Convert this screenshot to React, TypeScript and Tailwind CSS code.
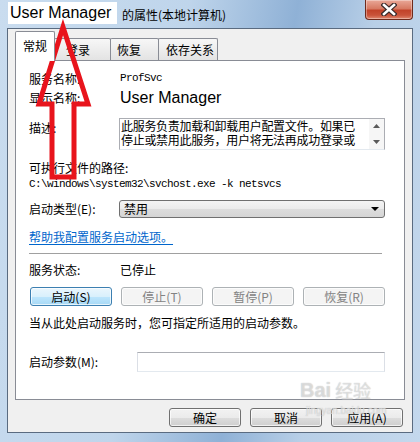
import React from "react";

type BtnKind = "normal" | "default" | "disabled";

function Btn({ kind = "normal", className = "", children }: { kind?: BtnKind; className?: string; children: React.ReactNode }) {
  const look =
    kind === "default"
      ? "border-[#3c7fb1] bg-[linear-gradient(to_bottom,#eaf6fd_0%,#d9f0fc_50%,#bee6fd_50%,#a7d9f5_100%)] text-black"
      : kind === "disabled"
      ? "border-[#adb2b5] bg-[#f4f4f4] text-[#838383]"
      : "border-[#707070] bg-[linear-gradient(to_bottom,#f2f2f2_0%,#ebebeb_50%,#dddddd_50%,#cfcfcf_100%)] text-black";
  return (
    <div className={`h-full flex items-center justify-center rounded-[3px] border shadow-[inset_0_0_0_1px_rgba(255,255,255,0.7)] text-[12px] leading-none ${look} ${className}`}>
      {children}
    </div>
  );
}

function Tab({ label, active = false, className = "" }: { label: string; active?: boolean; className?: string }) {
  if (active) {
    return (
      <div className={`relative z-10 h-[30px] mb-[-1px] bg-white border border-b-0 border-[#898c95] rounded-t-[2px] pt-[7px] leading-[14px] ${className}`}>
        {label}
      </div>
    );
  }
  return (
    <div className={`h-[22px] ml-[-1px] border border-b-0 border-[#898c95] rounded-t-[2px] bg-[linear-gradient(to_bottom,#f7f7f7,#e3e3e3)] pt-[4px] leading-[14px] ${className}`}>
      {label}
    </div>
  );
}

export default function App() {
  return (
    <div className="relative w-[420px] h-[442px] overflow-hidden flex flex-col bg-[linear-gradient(100deg,#c9dcef_0%,#bfd5eb_38%,#8fb1d6_60%,#b8cfe7_76%,#c4d8ed_100%)] font-['Noto_Sans_CJK_SC',sans-serif] text-[12px] text-black">
      {/* title bar */}
      <div className="h-[28px] shrink-0 flex items-start pl-[8px]">
        <div className="mt-[2px] h-[22px] w-[109px] bg-white flex items-center pl-[2px] font-['Liberation_Sans',sans-serif] text-[16px] leading-none">
          User Manager
        </div>
        <div className="ml-[5px] mt-[8px] leading-[14px]">的属性(本地计算机)</div>
        <div className="ml-auto mr-[7px] w-[48px] h-[20px] rounded-b-[4px] border border-t-0 border-[#6e2a1c] bg-[linear-gradient(to_bottom,#e9a898_0%,#d77a63_45%,#c2432a_55%,#c9533a_80%,#e08870_100%)] shadow-[inset_0_0_0_1px_rgba(255,255,255,0.35)] flex items-center justify-center">
          <svg width="16" height="13" viewBox="0 0 16 13">
            <path d="M3 2 L13 11 M13 2 L3 11" stroke="#3b2a2a" strokeWidth="5" strokeLinecap="square" />
            <path d="M3 2 L13 11 M13 2 L3 11" stroke="#ffffff" strokeWidth="2.6" strokeLinecap="square" />
          </svg>
        </div>
      </div>

      {/* client area */}
      <div className="mx-[7px] h-[405px] shrink-0 border border-[#5a6b80] bg-[#f0f0f0] flex flex-col px-[7px] pt-[2px]">
        <div className="h-[29px] flex items-end">
          <Tab label="常规" active className="w-[40px] pl-[7px]" />
          <Tab label="登录" className="w-[57px] pl-[11px]" />
          <Tab label="恢复" className="w-[49px] pl-[6px]" />
          <Tab label="依存关系" className="w-[60px] pl-[7px]" />
        </div>

        {/* tab panel */}
        <div className="h-[340px] w-[390px] bg-white border border-[#898c95] flex flex-col pl-[13px] pt-[8px]">
          <div className="h-[19px] flex items-center">
            <div className="w-[90px]">服务名称:</div>
            <div className="ml-px font-['Liberation_Mono',monospace] text-[11px] tracking-[-0.6px]">ProfSvc</div>
          </div>
          <div className="h-[19px] flex items-center">
            <div className="w-[90px]">显示名称:</div>
            <div className="ml-px font-['Liberation_Sans',sans-serif] text-[16px] leading-none">User Manager</div>
          </div>
          <div className="mt-[11px] h-[32px] flex">
            <div className="w-[90px] pt-[3px] leading-[14px]">描述:</div>
            <div className="w-[266px] h-[32px] flex border border-[#abadb3] border-b-[#e3e9ef]">
              <div className="w-[249px] pl-px text-[12px] tracking-[-0.3px] leading-[14px] whitespace-nowrap">
                <div>此服务负责加载和卸载用户配置文件。如果已</div>
                <div>停止或禁用此服务，用户将无法再成功登录或</div>
              </div>
              <div className="w-[15px] ml-auto bg-[#f6f6f6] flex flex-col items-center justify-between py-[5px]">
                <svg width="7" height="4" viewBox="0 0 7 4"><path d="M0 4 L3.5 0 L7 4 Z" fill="#5a5a5a" /></svg>
                <svg width="7" height="4" viewBox="0 0 7 4"><path d="M0 0 L3.5 4 L7 0 Z" fill="#5a5a5a" /></svg>
              </div>
            </div>
          </div>
          <div className="mt-[10px] h-[16px] flex items-center">可执行文件的路径:</div>
          <div className="h-[16px] flex items-center font-['Liberation_Mono',monospace] text-[11px] tracking-[-0.6px]">
            C:\windows\system32\svchost.exe -k netsvcs
          </div>
          <div className="mt-[8px] h-[18px] flex items-center">
            <div className="w-[90px]">启动类型(E):</div>
            <div className="w-[266px] h-[18px] flex items-center justify-between rounded-[3px] border border-[#707070] bg-[linear-gradient(to_bottom,#f4f4f4_0%,#ebebeb_50%,#dddddd_50%,#d5d5d5_100%)] pl-[4px] pr-[5px]">
              <span className="leading-none">禁用</span>
              <svg width="8" height="4" viewBox="0 0 8 4"><path d="M0 0 L8 0 L4 4 Z" fill="#000" /></svg>
            </div>
          </div>
          <div className="mt-[11px] h-[16px] flex items-center">
            <span className="text-[#0066cc] underline underline-offset-2">帮助我配置服务启动选项。</span>
          </div>
          <div className="mt-[8px] h-px w-[353px] bg-[#a0a0a0]" />
          <div className="mt-[8px] h-[16px] flex items-center">
            <div className="w-[90px]">服务状态:</div>
            <div className="ml-px">已停止</div>
          </div>
          <div className="mt-[9px] h-[19px] ml-px w-[355px] grid grid-cols-4 gap-[9px]">
            <Btn kind="default">启动(S)</Btn>
            <Btn kind="disabled">停止(T)</Btn>
            <Btn kind="disabled">暂停(P)</Btn>
            <Btn kind="disabled">恢复(R)</Btn>
          </div>
          <div className="mt-[9px] h-[16px] flex items-center">当从此处启动服务时，您可指定所适用的启动参数。</div>
          <div className="mt-[21px] h-[20px] flex items-center">
            <div className="w-[108px]">启动参数(M):</div>
            <div className="w-[248px] h-[20px] border border-[#abadb3] border-x-[#dbdfe6] border-b-[#e3e9ef] bg-white" />
          </div>
        </div>

        {/* dialog buttons */}
        <div className="mt-[8px] h-[19px] flex justify-end gap-[9px] pr-[2px]">
          <Btn className="w-[72px]">确定</Btn>
          <Btn className="w-[72px]">取消</Btn>
          <Btn className="w-[72px]">应用(A)</Btn>
        </div>
      </div>

      {/* watermark */}
      <div className="absolute left-[300px] top-[380px] flex flex-col items-start text-white/50 [text-shadow:0_0_1px_#b0b0b0] pointer-events-none">
        <div className="flex items-center gap-[4px]">
          <span className="font-['Liberation_Sans',sans-serif] font-bold text-[20px] leading-none">Bai</span>
          <span className="text-[18px] leading-none">经验</span>
        </div>
        <span className="ml-[6px] mt-[6px] font-['Liberation_Sans',sans-serif] text-[10px] leading-none">jingyan.baidu.com</span>
      </div>

      {/* red arrow annotation */}
      <svg className="absolute left-0 top-0 pointer-events-none" width="420" height="442" viewBox="0 0 420 442">
        <path d="M63 27 L88 104 L74 104 L74 177 L52 177 L52 104 L39 104 Z" fill="none" stroke="#e8141c" strokeWidth="5" strokeLinejoin="miter" />
      </svg>
    </div>
  );
}
